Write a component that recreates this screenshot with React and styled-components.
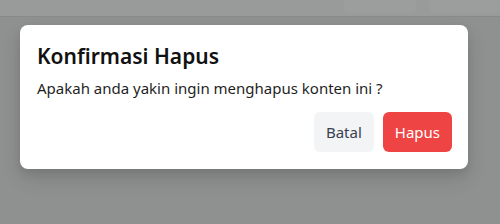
import React from "react";
import styled, { createGlobalStyle } from "styled-components";

const Global = createGlobalStyle`
  html, body { margin: 0; padding: 0; background: #8f9090; }
  body { width: 500px; height: 224px; overflow: hidden; }
`;

const Page = styled.div`
  width: 500px;
  height: 224px;
  background: #8f9090;
  display: flex;
  flex-direction: column;
`;

const TopBar = styled.div`
  height: 16px;
  background: #999a9a;
  border-bottom: 1px solid #888989;
  display: flex;
  justify-content: flex-end;
  gap: 14px;
`;

const TopChip = styled.div`
  width: ${(p) => p.$w}px;
  height: 13px;
  background: #9c9d9d;
  border-radius: 0 0 4px 4px;
`;

const Modal = styled.div`
  margin: 8px 0 0 20px;
  width: 448px;
  height: 144px;
  box-sizing: border-box;
  background: #ffffff;
  border-radius: 8px;
  box-shadow: 0 10px 20px rgba(0, 0, 0, 0.12), 0 4px 8px rgba(0, 0, 0, 0.08);
  padding: 17px 16px 16px 17px;
  display: flex;
  flex-direction: column;
`;

const Title = styled.h2`
  margin: 0;
  font-family: "Noto Sans", sans-serif;
  font-weight: 600;
  font-size: 21px;
  line-height: 28px;
  color: #111111;
`;

const Message = styled.p`
  margin: 7px 0 0 0;
  font-family: "Noto Sans", sans-serif;
  font-size: 15px;
  line-height: 22px;
  color: #1f1f1f;
`;

const Actions = styled.div`
  margin-top: 13px;
  display: flex;
  justify-content: flex-end;
  gap: 9px;
`;

const Button = styled.button`
  height: 40px;
  padding: 0 12px;
  border: none;
  border-radius: 6px;
  font-family: "Noto Sans", sans-serif;
  font-size: 15px;
  background: ${(p) => (p.$danger ? "#ef4444" : "#f3f4f6")};
  color: ${(p) => (p.$danger ? "#ffffff" : "#374151")};
  cursor: pointer;
`;

export default function App() {
  return (
    <>
      <Global />
      <Page>
        <TopBar>
          <TopChip $w={72} />
          <TopChip $w={70} />
        </TopBar>
        <Modal>
          <Title>Konfirmasi Hapus</Title>
          <Message>Apakah anda yakin ingin menghapus konten ini ?</Message>
          <Actions>
            <Button>Batal</Button>
            <Button $danger>Hapus</Button>
          </Actions>
        </Modal>
      </Page>
    </>
  );
}
